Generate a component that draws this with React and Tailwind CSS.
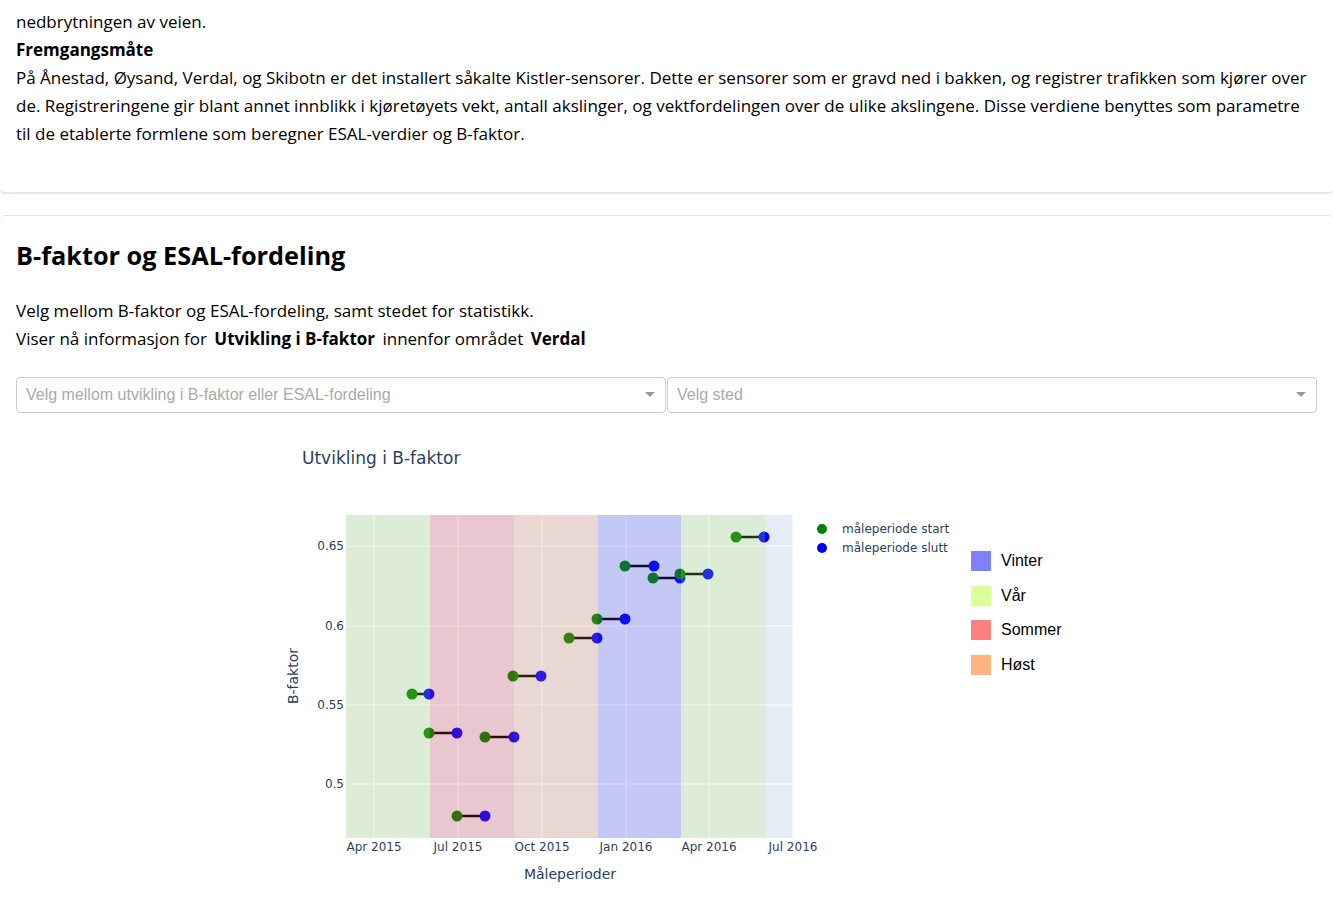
import React from "react";

const GREEN_M = "#008000";
const BLUE_M = "#0000ff";

const points = [
  [412, 429, 694],
  [429, 457, 733],
  [485, 514, 737],
  [457, 485, 816],
  [513, 541, 676],
  [569, 597, 638],
  [597, 625, 619],
  [625, 654, 566],
  [653, 680, 578],
  [680, 708, 574],
  [736, 764, 537],
];

const bands = [
  [346, 430, "rgb(184,241,96)"],
  [430, 514, "rgb(244,56,61)"],
  [514, 598, "rgb(244,136,71)"],
  [598, 681, "rgb(59,61,241)"],
  [681, 765, "rgb(184,241,96)"],
];

const xTicks = [
  [374, "Apr 2015"],
  [458, "Jul 2015"],
  [542, "Oct 2015"],
  [626, "Jan 2016"],
  [709, "Apr 2016"],
  [793, "Jul 2016"],
];

const yTicks = [
  [546, "0.65"],
  [626, "0.6"],
  [705, "0.55"],
  [784, "0.5"],
];

function Chart() {
  const top = 515;
  const bottom = 838;
  const left = 346;
  const right = 793;
  return (
    <svg
      width="940"
      height="487"
      viewBox="16 413 940 487"
      className="block shrink-0"
      style={{ fontFamily: '"DejaVu Sans", Verdana, sans-serif' }}
    >
      <text x="302" y="464" fontSize="17" fill="#2a3f5f">
        Utvikling i B-faktor
      </text>
      <rect x={left} y={top} width={right - left} height={bottom - top} fill="#e5ecf6" />
      {yTicks.map(([y]) => (
        <line key={"gy" + y} x1={left} x2={right} y1={y} y2={y} stroke="#ffffff" strokeWidth="1" />
      ))}
      {xTicks.map(([x]) => (
        <line key={"gx" + x} x1={x} x2={x} y1={top} y2={bottom} stroke="#ffffff" strokeWidth="1" />
      ))}
      {points.map(([x1, x2, y], i) => (
        <line key={"l" + i} x1={x1} x2={x2} y1={y} y2={y} stroke="#000000" strokeWidth="2.5" />
      ))}
      {points.map(([x1, x2, y], i) => (
        <g key={"p" + i}>
          <circle cx={x1} cy={y} r="5.5" fill={GREEN_M} />
          <circle cx={x2} cy={y} r="5.5" fill={BLUE_M} />
        </g>
      ))}
      {bands.map(([a, b, c], i) => (
        <rect key={"b" + i} x={a} y={top} width={b - a} height={bottom - top} fill={c} fillOpacity="0.2" />
      ))}
      {yTicks.map(([y, t]) => (
        <text key={"ty" + y} x="344" y={y + 4} fontSize="12" fill="#2a3f5f" textAnchor="end">
          {t}
        </text>
      ))}
      {xTicks.map(([x, t]) => (
        <text key={"tx" + x} x={x} y="851" fontSize="12" fill="#2a3f5f" textAnchor="middle">
          {t}
        </text>
      ))}
      <text x="570" y="879" fontSize="14" fill="#2a3f5f" textAnchor="middle">
        Måleperioder
      </text>
      <text
        x="298"
        y="676"
        fontSize="14"
        fill="#2a3f5f"
        textAnchor="middle"
        transform="rotate(-90 298 676)"
      >
        B-faktor
      </text>
      <circle cx="822" cy="529" r="5" fill={GREEN_M} />
      <circle cx="822" cy="548" r="5" fill={BLUE_M} />
      <text x="842" y="533" fontSize="12" fill="#2a3f5f">
        måleperiode start
      </text>
      <text x="842" y="552" fontSize="12" fill="#2a3f5f">
        måleperiode slutt
      </text>
    </svg>
  );
}

function Caret() {
  return (
    <svg width="10" height="6" viewBox="0 0 10 6" className="shrink-0">
      <path d="M0 0 L10 0 L5 5 Z" fill="#999999" />
    </svg>
  );
}

function Select({ placeholder }) {
  return (
    <div className="flex h-[36px] flex-1 items-center justify-between rounded border border-[#cccccc] bg-white pl-[9px] pr-[10px]">
      <span className="text-[16px] text-[#aaaaaa]" style={{ fontFamily: '"Liberation Sans", Arial, sans-serif' }}>
        {placeholder}
      </span>
      <Caret />
    </div>
  );
}

const seasons = [
  ["Vinter", "#8080ff"],
  ["Vår", "#d9ff99"],
  ["Sommer", "#ff8080"],
  ["Høst", "#ffb380"],
];

export default function App() {
  return (
    <div
      className="min-h-[905px] overflow-hidden bg-white text-black"
      style={{ fontFamily: '"Open Sans", "Noto Sans", sans-serif' }}
    >
      <div className="-mx-px rounded-b-md border-b-2 border-[#e3e4e8] px-[17px] pb-[44px] pt-[8px] text-[17px] leading-[28px]">
        <p>nedbrytningen av veien.</p>
        <p className="font-bold">Fremgangsmåte</p>
        <p>
          På Ånestad, Øysand, Verdal, og Skibotn er det installert såkalte Kistler-sensorer. Dette er sensorer som er gravd
          ned i bakken, og registrer trafikken som kjører over
          <br />
          de. Registreringene gir blant annet innblikk i kjøretøyets vekt, antall akslinger, og vektfordelingen over de
          ulike akslingene. Disse verdiene benyttes som parametre
          <br />
          til de etablerte formlene som beregner ESAL-verdier og B-faktor.
        </p>
      </div>

      <div className="-mx-px mt-[21px] rounded-t-md border-t border-[#e3e4e8] px-[17px] pt-[23px]">
        <h2 className="text-[25.3px] font-bold leading-[32px]">B-faktor og ESAL-fordeling</h2>
        <div className="mt-[26px] text-[17px] leading-[28px]">
          <p>Velg mellom B-faktor og ESAL-fordeling, samt stedet for statistikk.</p>
          <p>
            Viser nå informasjon for <b className="mx-[3px]">Utvikling i B-faktor</b> innenfor området{" "}
            <b className="ml-[3px]">Verdal</b>
          </p>
        </div>
        <div className="mt-[24px] flex gap-px">
          <Select placeholder="Velg mellom utvikling i B-faktor eller ESAL-fordeling" />
          <Select placeholder="Velg sted" />
        </div>
        <div className="flex">
          <Chart />
          <div
            className="mt-[138px] flex flex-col gap-[14.5px] pl-[15px]"
            style={{ fontFamily: '"Liberation Sans", Arial, sans-serif' }}
          >
            {seasons.map(([name, color]) => (
              <div key={name} className="flex items-center gap-[10px]">
                <span className="block h-[20px] w-[20px]" style={{ backgroundColor: color }} />
                <span className="text-[16px] leading-[20px] text-black">{name}</span>
              </div>
            ))}
          </div>
        </div>
      </div>
    </div>
  );
}
